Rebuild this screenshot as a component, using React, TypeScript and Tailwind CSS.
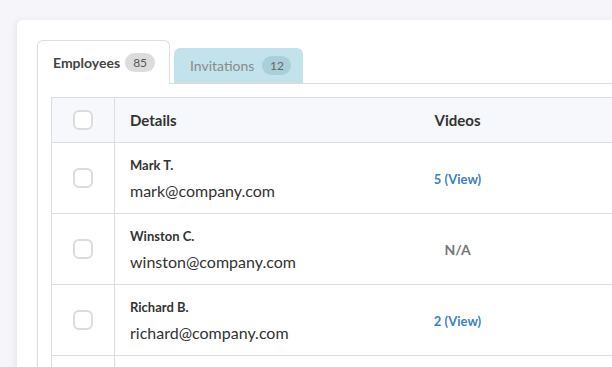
import React from "react";

const rows = [
  { name: "Mark T.", email: "mark@company.com", videos: "5 (View)", link: true },
  { name: "Winston C.", email: "winston@company.com", videos: "N/A", link: false },
  { name: "Richard B.", email: "richard@company.com", videos: "2 (View)", link: true },
  { name: "", email: "", videos: "", link: false },
];

function Box() {
  return <div className="w-5 h-5 rounded-[6px] border-2 border-[#dcdcdc] bg-white mx-auto" />;
}

export default function App() {
  return (
    <div
      className="h-[367px] w-[612px] overflow-hidden bg-[#f6f6fa] pt-5 pl-[17px]"
      style={{ fontFamily: "Lato, 'Noto Sans', sans-serif" }}
    >
      <div className="w-[700px] h-[400px] bg-white rounded-tl-md shadow-[-2px_0_6px_rgba(0,0,0,0.06)] pt-5 pl-5">
        <div className="flex items-end border-b border-[#dddddd]">
          <div className="h-[44px] w-[133px] -mb-px bg-white border border-b-0 border-[#dddddd] rounded-t-md pl-[15px] flex items-center gap-[5px]">
            <span className="text-[14px] font-bold text-[#444]">Employees</span>
            <span className="h-[19px] w-[30px] justify-center rounded-full bg-[#dcdcdc] text-[12px] text-[#555] flex items-center">85</span>
          </div>
          <div className="ml-[4px] h-[35px] w-[129px] bg-[#c3e3ec] rounded-t-md pl-4 flex items-center gap-[8px]">
            <span className="text-[14px] text-[#8a8a8a]">Invitations</span>
            <span className="h-[19px] w-[29px] justify-center rounded-full bg-[#a9cfd8] text-[12px] text-[#666] flex items-center">12</span>
          </div>
        </div>
        <div className="border-l border-[#dddddd] pl-[13px] pt-[13px]">
          <table className="border-collapse text-[#333]">
            <thead>
              <tr className="bg-[#f7f8fc] h-[45px]">
                <th className="w-[63px] border border-[#dddddd] p-0"><Box /></th>
                <th className="w-[230px] border-y border-l border-[#dddddd] text-left pl-[15px] text-[15px] font-bold">Details</th>
                <th className="w-[226px] border-y border-[#dddddd] text-center text-[15px] font-bold">Videos</th>
                <th className="w-[100px] border-y border-[#dddddd]"></th>
              </tr>
            </thead>
            <tbody>
              {rows.map((r, i) => (
                <tr key={i} className="h-[71px]">
                  <td className="border border-[#dddddd] p-0">{r.name && <Box />}</td>
                  <td className="border-y border-l border-[#dddddd] pl-[15px]">
                    {r.name && (
                      <div className="flex flex-col gap-[8px] pt-[2px]">
                        <span className="text-[13px] font-bold leading-[15px] text-[#333]">{r.name}</span>
                        <span className="text-[16px] leading-[19px] text-[#333]">{r.email}</span>
                      </div>
                    )}
                  </td>
                  <td className="border-y border-[#dddddd] text-center">
                    <span className={r.link ? "text-[13px] font-bold text-[#3b7fc4]" : "text-[14px] font-bold text-[#777]"}>
                      {r.videos}
                    </span>
                  </td>
                  <td className="border-y border-[#dddddd]"></td>
                </tr>
              ))}
            </tbody>
          </table>
        </div>
      </div>
    </div>
  );
}
